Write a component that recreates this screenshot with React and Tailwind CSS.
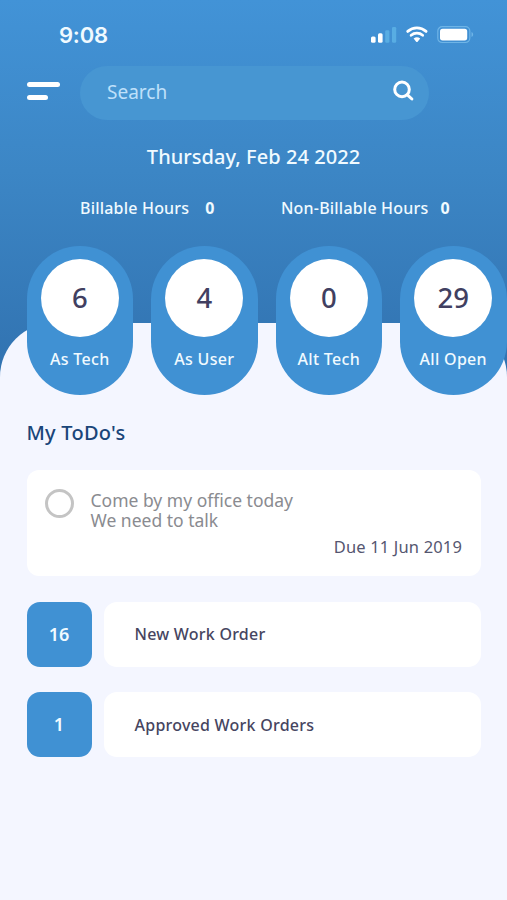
const stats = [
  { value: "6", label: "As Tech" },
  { value: "4", label: "As User" },
  { value: "0", label: "Alt Tech" },
  { value: "29", label: "All Open" },
];

const orders = [
  { count: "16", label: "New Work Order" },
  { count: "1", label: "Approved Work Orders" },
];

function StatusIcons() {
  return (
    <svg width="104" height="20" viewBox="0 0 104 20" fill="none" aria-hidden="true">
      <rect x="1" y="10.5" width="4.6" height="6.3" rx="1.5" fill="#fff" />
      <rect x="8" y="7.3" width="4.6" height="9.5" rx="1.5" fill="#fff" />
      <rect x="15.2" y="4.2" width="4.2" height="12.6" rx="1.3" fill="#58ade3" />
      <rect x="22" y="1" width="4.2" height="15.8" rx="1.3" fill="#58ade3" />
      <path d="M37.7 5.4C43 0.8 50.8 0.8 56.1 5.4" stroke="#fff" strokeWidth="2.8" strokeLinecap="round" />
      <path d="M41.1 9.3C44.4 6.5 49.4 6.5 52.7 9.3" stroke="#fff" strokeWidth="2.7" strokeLinecap="round" />
      <path d="M43.6 12.6Q46.9 10 50.2 12.6L47.8 15.5Q46.9 16.5 46 15.5Z" fill="#fff" />
      <rect x="67.8" y="0.7" width="32" height="15.8" rx="4.4" stroke="#6eb4e6" strokeWidth="1.2" />
      <rect x="70" y="2.8" width="27.2" height="11.6" rx="2.6" fill="#fff" />
      <path d="M101.5 6v5c2.2-1 2.2-4 0-5Z" fill="#6eb4e6" />
    </svg>
  );
}

function SearchIcon() {
  return (
    <svg className="-mt-[4px]" width="22" height="22" viewBox="0 0 22 22" fill="none" stroke="#fff" strokeWidth="3" strokeLinecap="round" aria-hidden="true">
      <circle cx="9" cy="9.4" r="7.3" />
      <path d="M14.4 14.8L18.9 19" />
    </svg>
  );
}

function Header() {
  return (
    <header className="h-[246px] text-[#f0faff]">
      <div className="flex h-[66px] items-start justify-between pl-[59px] pr-[33px] pt-[19px]">
        <span className="font-['Inter'] text-[22px] font-semibold leading-[32px] tracking-[-0.2px]">9:08</span>
        <div className="pt-[7px]">
          <StatusIcons />
        </div>
      </div>
      <div className="flex h-[54px] items-center pl-[26.5px]">
        <div className="-mt-[4px] flex w-[53px] flex-col gap-[7.5px]">
          <span className="h-[5px] w-[33px] rounded-full bg-white" />
          <span className="h-[5px] w-[21px] rounded-full bg-white" />
        </div>
        <div className="flex h-[54px] w-[349px] items-center justify-between rounded-full bg-[#4796d2] pl-[27.5px] pr-[14px]">
          <span className="-mt-[2px] text-[19px] text-[#bfe0fa]">Search</span>
          <SearchIcon />
        </div>
      </div>
      <div className="mt-[23px] text-center text-[20px] font-medium leading-[28px] tracking-[0.05px]">Thursday, Feb 24 2022</div>
      <div className="mt-[25px] flex pl-[80px] text-[16px] font-medium leading-[24px] tracking-[0.2px]">
        <div className="flex w-[201px] gap-[16px]">
          <span>Billable Hours</span>
          <span className="font-bold">0</span>
        </div>
        <div className="flex gap-[12px]">
          <span>Non-Billable Hours</span>
          <span className="font-bold">0</span>
        </div>
      </div>
    </header>
  );
}

function Stat({ value, label }) {
  return (
    <div className="flex h-[149px] w-[106.5px] shrink-0 flex-col items-center rounded-full bg-[#4091d3] pt-[12.5px]">
      <div className="flex h-[78px] w-[78px] items-center justify-center rounded-full bg-white text-[27.5px] font-medium text-[#413f61]">
        {value}
      </div>
      <span className="mt-[10px] whitespace-nowrap text-[16px] font-medium leading-[24px] tracking-[0.3px] text-[#f0faff]">{label}</span>
    </div>
  );
}

export default function App() {
  return (
    <div className="h-[900px] w-[507px] overflow-hidden bg-[#f4f6ff] font-['Noto_Sans',sans-serif]">
      <div className="h-[380px] bg-linear-to-b from-[#4293d7] via-[#3c86c5] via-45% to-[#3172b0]">
        <Header />
        <div className="relative z-10 flex gap-[18px] pl-[26.5px]">
          {stats.map((s) => (
            <Stat key={s.label} {...s} />
          ))}
        </div>
        <main className="-mt-[72px] h-[577px] rounded-t-[54px] bg-[#f4f6ff] px-[26.5px] pt-[96px]">
          <h2 className="text-[20px] font-medium leading-[28px] tracking-[0.25px] text-[#1a4579]">My ToDo's</h2>
          <section className="mt-[23px] flex h-[106px] w-[454.5px] rounded-[12px] bg-white pl-[18px] pr-[19px] pt-[19px]">
            <span className="h-[29px] w-[29px] shrink-0 rounded-full border-[3px] border-[#c4c4c4]" />
            <div className="flex grow flex-col pl-[17px] pt-[1px]">
              <p className="text-[17.5px] leading-[20px] text-[#8a8b90]">
                Come by my office today
                <br />
                We need to talk
              </p>
              <span className="mt-[6px] self-end text-[16.5px] leading-[22px] tracking-[0.15px] text-[#555670]">Due 11 Jun 2019</span>
            </div>
          </section>
          {orders.map((o) => (
            <div key={o.label} className="mt-[25.5px] flex h-[65px] w-[454.5px] gap-[12px]">
              <span className="flex w-[65px] items-center justify-center rounded-[13px] bg-[#4091d3] text-[18px] font-semibold text-[#f0faff]">
                {o.count}
              </span>
              <span className="flex grow items-center rounded-[13px] bg-white pl-[31px] text-[16px] font-medium tracking-[0.24px] text-[#46455f]">
                {o.label}
              </span>
            </div>
          ))}
        </main>
      </div>
    </div>
  );
}
